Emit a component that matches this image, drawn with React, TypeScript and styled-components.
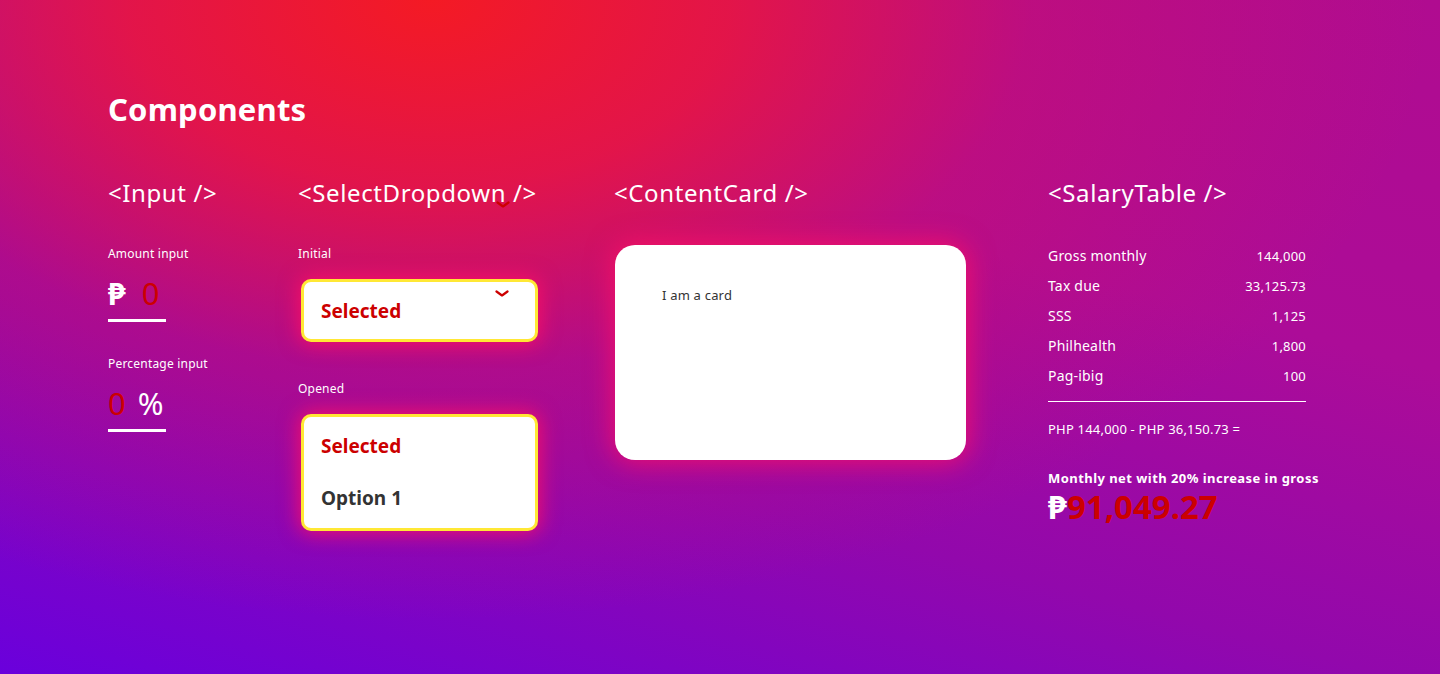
import styled, { createGlobalStyle } from 'styled-components';

const GlobalStyle = createGlobalStyle`
  html, body {
    margin: 0;
    padding: 0;
  }
  body {
    font-family: 'Noto Sans', 'DejaVu Sans', sans-serif;
    color: #ffffff;
  }
`;

const Page = styled.div`
  width: 100%;
  min-height: 674px;
  overflow: hidden;
  background:
    radial-gradient(ellipse 1000px 620px at 430px 0px, #f41a24 0%, rgba(236, 22, 60, 0.85) 30%, rgba(210, 16, 100, 0.4) 60%, rgba(180, 12, 140, 0) 100%),
    linear-gradient(15deg, #6a00dc 0%, #9208ac 35%, #ac0c98 65%, #b00c90 100%);
  padding: 88px 0 0 108px;
  box-sizing: border-box;
`;

const Title = styled.h1`
  margin: 0;
  font-size: 31px;
  line-height: 42px;
  font-weight: 700;
  letter-spacing: 0.2px;
`;

const Columns = styled.div`
  display: grid;
  grid-template-columns: 190px 316px 434px 258px;
  margin-top: 48px;
`;

const Column = styled.section`
  display: flex;
  flex-direction: column;
  align-items: flex-start;
  position: relative;
`;

const Heading = styled.h2`
  margin: 0 0 38px;
  font-size: 24px;
  line-height: 30px;
  font-weight: 400;
  letter-spacing: 0.6px;
  white-space: nowrap;
`;

const Label = styled.div`
  font-size: 12px;
  line-height: 16px;
  letter-spacing: 0.2px;
`;

// <Input />
const AmountField = styled.div<{ gap: number }>`
  display: flex;
  align-items: baseline;
  gap: ${(p) => p.gap}px;
  width: 58px;
  margin-top: 16px;
  padding-bottom: 11px;
  border-bottom: 3px solid #ffffff;
  font-size: 31px;
  line-height: 30px;
  margin-bottom: 34px;
`;

const Symbol = styled.span<{ bold?: boolean }>`
  color: #ffffff;
  font-weight: ${(p) => (p.bold ? 700 : 400)};
`;

const RedValue = styled.span`
  color: #cc0000;
`;

// <SelectDropdown />
const SelectBox = styled.div<{ open?: boolean }>`
  position: relative;
  width: 237px;
  box-sizing: border-box;
  margin: 17px 0 0 3px;
  border: 3px solid #ffe835;
  border-radius: 10px;
  background: #ffffff;
  box-shadow: 0 0 20px 2px rgba(255, 16, 100, 0.9);
  padding: ${(p) => (p.open ? '3px 0 4px' : '0')};
  height: ${(p) => (p.open ? '117px' : '63px')};
  display: flex;
  flex-direction: column;
  justify-content: ${(p) => (p.open ? 'flex-start' : 'center')};
  margin-bottom: ${(p) => (p.open ? '0' : '39px')};
`;

const Option = styled.div<{ selected?: boolean }>`
  padding: 13px 17px;
  font-size: 19px;
  line-height: 26px;
  font-weight: 700;
  color: ${(p) => (p.selected ? '#cc0000' : '#333333')};
`;

const Chevron = styled.svg`
  position: absolute;
  top: 8px;
  right: 26px;
`;

const StrayChevron = styled.svg`
  position: absolute;
  top: 23px;
  left: 198px;
`;

// <ContentCard />
const Card = styled.div`
  width: 351px;
  height: 215px;
  margin: -1px 0 0 1px;
  box-sizing: border-box;
  padding: 42px 47px;
  background: #ffffff;
  border-radius: 20px;
  box-shadow: 0 0 26px 3px rgba(255, 16, 100, 0.8);
  color: #333333;
  font-size: 13px;
  line-height: 16px;
  letter-spacing: 0.2px;
`;

// <SalaryTable />
const Table = styled.div`
  width: 258px;
  margin-top: -5px;
`;

const Row = styled.div`
  display: flex;
  justify-content: space-between;
  align-items: baseline;
  height: 30px;
  line-height: 30px;
`;

const RowLabel = styled.span`
  font-size: 14px;
  letter-spacing: 0.2px;
`;

const RowValue = styled.span`
  font-size: 13px;
  letter-spacing: 0.2px;
`;

const Divider = styled.hr`
  margin: 10px 0 0;
  border: none;
  border-top: 1px solid #ffffff;
`;

const Formula = styled.div`
  margin-top: 19px;
  font-size: 13px;
  line-height: 16px;
  letter-spacing: 0.2px;
`;

const NetLabel = styled.div`
  margin-top: 33px;
  font-size: 13px;
  line-height: 16px;
  font-weight: 700;
  letter-spacing: 0.45px;
  white-space: nowrap;
`;

const NetValue = styled.div`
  margin-top: 4px;
  font-size: 33px;
  line-height: 34px;
  font-weight: 700;
`;

const rows = [
  ['Gross monthly', '144,000'],
  ['Tax due', '33,125.73'],
  ['SSS', '1,125'],
  ['Philhealth', '1,800'],
  ['Pag-ibig', '100'],
];

const ChevronIcon = ({ Comp }: { Comp: typeof Chevron }) => (
  <Comp width="14" height="8" viewBox="0 0 14 8">
    <path d="M1.5 1.5 L7 5.5 L12.5 1.5" fill="none" stroke="#cc0000" strokeWidth="2.2" strokeLinecap="round" strokeLinejoin="round" />
  </Comp>
);

const App = () => {
  return (
    <Page>
      <GlobalStyle />
      <Title>Components</Title>
      <Columns>
        <Column>
          <Heading>&lt;Input /&gt;</Heading>
          <Label>Amount input</Label>
          <AmountField gap={16}>
            <Symbol bold>₱</Symbol>
            <RedValue>0</RedValue>
          </AmountField>
          <Label>Percentage input</Label>
          <AmountField gap={12}>
            <RedValue>0</RedValue>
            <Symbol>%</Symbol>
          </AmountField>
        </Column>

        <Column>
          <Heading>&lt;SelectDropdown /&gt;</Heading>
          <ChevronIcon Comp={StrayChevron} />
          <Label>Initial</Label>
          <SelectBox>
            <Option selected>Selected</Option>
            <ChevronIcon Comp={Chevron} />
          </SelectBox>
          <Label>Opened</Label>
          <SelectBox open>
            <Option selected>Selected</Option>
            <Option>Option 1</Option>
          </SelectBox>
        </Column>

        <Column>
          <Heading>&lt;ContentCard /&gt;</Heading>
          <Card>I am a card</Card>
        </Column>

        <Column>
          <Heading>&lt;SalaryTable /&gt;</Heading>
          <Table>
            {rows.map(([label, value]) => (
              <Row key={label}>
                <RowLabel>{label}</RowLabel>
                <RowValue>{value}</RowValue>
              </Row>
            ))}
            <Divider />
            <Formula>PHP 144,000 - PHP 36,150.73 =</Formula>
            <NetLabel>Monthly net with 20% increase in gross</NetLabel>
            <NetValue>
              <Symbol bold>₱</Symbol>
              <RedValue>91,049.27</RedValue>
            </NetValue>
          </Table>
        </Column>
      </Columns>
    </Page>
  );
};

export default App;
